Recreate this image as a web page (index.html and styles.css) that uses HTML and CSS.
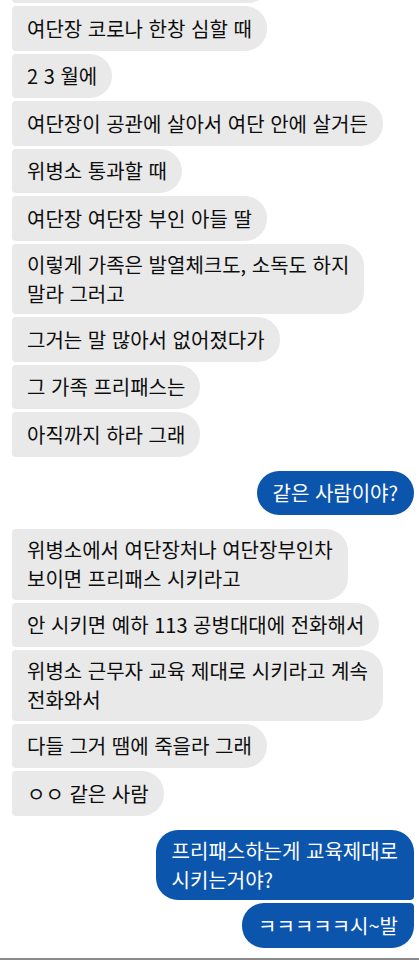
FILE: index.html
```html
<!DOCTYPE html>
<html lang="ko">
<head>
<meta charset="utf-8">
<title>Chat</title>
<link rel="stylesheet" href="styles.css">
</head>
<body>
<div class="screen">
  <div class="chat">
    <div class="group in">
      <div class="bubble cut"></div>
      <div class="bubble">여단장 코로나 한창 심할 때</div>
      <div class="bubble">2 3 월에</div>
      <div class="bubble">여단장이 공관에 살아서 여단 안에 살거든</div>
      <div class="bubble">위병소 통과할 때</div>
      <div class="bubble">여단장 여단장 부인 아들 딸</div>
      <div class="bubble multi">이렇게 가족은 발열체크도, 소독도 하지<br>말라 그러고</div>
      <div class="bubble">그거는 말 많아서 없어졌다가</div>
      <div class="bubble">그 가족 프리패스는</div>
      <div class="bubble">아직까지 하라 그래</div>
    </div>
    <div class="group out">
      <div class="bubble single">같은 사람이야?</div>
    </div>
    <div class="group in">
      <div class="bubble multi">위병소에서 여단장처나 여단장부인차<br>보이면 프리패스 시키라고</div>
      <div class="bubble">안 시키면 예하 113 공병대대에 전화해서</div>
      <div class="bubble multi">위병소 근무자 교육 제대로 시키라고 계속<br>전화와서</div>
      <div class="bubble">다들 그거 땜에 죽을라 그래</div>
      <div class="bubble">ㅇㅇ 같은 사람</div>
    </div>
    <div class="group out">
      <div class="bubble multi first">프리패스하는게 교육제대로<br>시키는거야?</div>
      <div class="bubble last">ㅋㅋㅋㅋㅋ시~발</div>
    </div>
  </div>
  <div class="bottom-line"></div>
</div>
</body>
</html>
```

FILE: styles.css
```css
html, body {
  margin: 0;
  padding: 0;
  background: #ffffff;
}

.screen {
  width: 419px;
  height: 960px;
  overflow: hidden;
  display: flex;
  flex-direction: column;
}

.chat {
  display: flex;
  flex-direction: column;
  gap: 14px;
  padding: 0 5px 0 12px;
  margin-top: -41.5px;
}

.group {
  display: flex;
  flex-direction: column;
  gap: 3px;
}

.group.in {
  align-items: flex-start;
}

.group.out {
  align-items: flex-end;
}

.bubble {
  font-family: "Noto Sans CJK KR", "Noto Sans", sans-serif;
  font-size: 20px;
  line-height: 29px;
  padding: 7.75px 15px;
  white-space: nowrap;
}

.bubble.multi {
  padding-top: 6.25px;
  padding-bottom: 6.25px;
}

.in .bubble {
  background: #e9e9e9;
  color: #0d0d0d;
  border-radius: 4px 22px 22px 4px;
}

.in .bubble.cut {
  width: 228px;
  height: 29px;
}

.out .bubble {
  background: #0b55ad;
  color: #ffffff;
  padding-left: 16px;
  padding-right: 16px;
}

.out .bubble.single {
  border-radius: 22px;
}

.out .bubble.first {
  border-radius: 22px 22px 4px 22px;
}

.out .bubble.last {
  border-radius: 22px 4px 22px 22px;
}

.bottom-line {
  margin-top: auto;
  height: 2px;
  background: #8a8a8a;
}
```
